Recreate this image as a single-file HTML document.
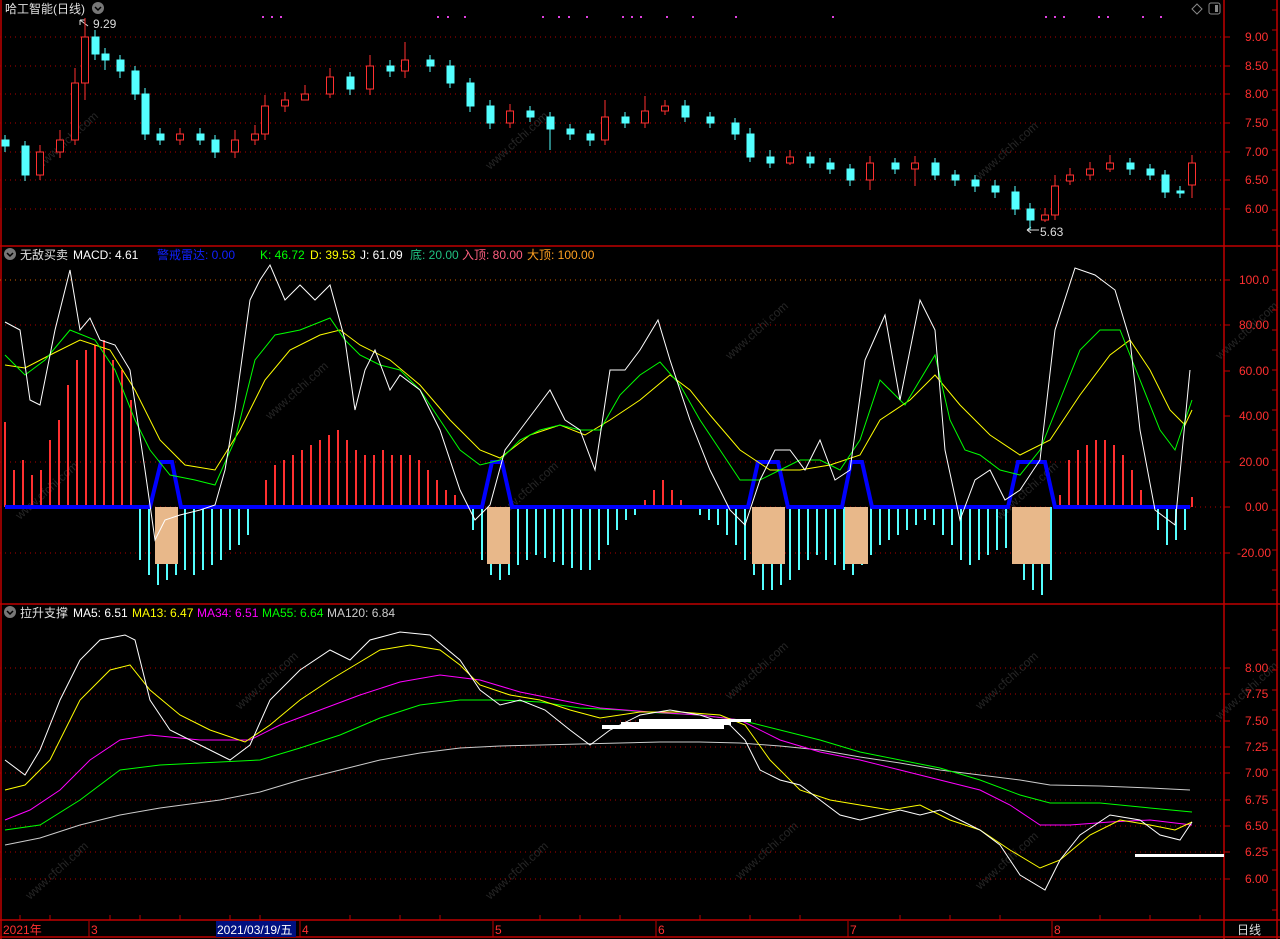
<!DOCTYPE html>
<html><head><meta charset="utf-8"><style>
html,body{margin:0;padding:0;background:#000;width:1280px;height:939px;overflow:hidden}
svg{display:block}
text{font-family:"Liberation Sans","Noto Sans CJK SC",sans-serif;font-size:12px}
</style></head><body>
<svg width="1280" height="939" xmlns="http://www.w3.org/2000/svg">
<rect width="1280" height="939" fill="#000"/>
<!-- watermarks -->
<g fill="#262626" font-size="26">
<text transform="translate(40,170) rotate(-42)">www.cfchi.com</text>
<text transform="translate(490,170) rotate(-42)">www.cfchi.com</text>
<text transform="translate(730,360) rotate(-42)">www.cfchi.com</text>
<text transform="translate(980,180) rotate(-42)">www.cfchi.com</text>
<text transform="translate(1220,360) rotate(-42)">www.cfchi.com</text>
<text transform="translate(20,520) rotate(-42)">www.cfchi.com</text>
<text transform="translate(270,420) rotate(-42)">www.cfchi.com</text>
<text transform="translate(500,520) rotate(-42)">www.cfchi.com</text>
<text transform="translate(1000,520) rotate(-42)">www.cfchi.com</text>
<text transform="translate(240,710) rotate(-42)">www.cfchi.com</text>
<text transform="translate(730,700) rotate(-42)">www.cfchi.com</text>
<text transform="translate(980,710) rotate(-42)">www.cfchi.com</text>
<text transform="translate(1220,720) rotate(-42)">www.cfchi.com</text>
<text transform="translate(30,900) rotate(-42)">www.cfchi.com</text>
<text transform="translate(490,900) rotate(-42)">www.cfchi.com</text>
<text transform="translate(740,880) rotate(-42)">www.cfchi.com</text>
<text transform="translate(980,890) rotate(-42)">www.cfchi.com</text>
</g>
<g stroke="#c00000" stroke-width="1.5" fill="none">
<line x1="1" y1="0" x2="1" y2="939"/>
<line x1="1224" y1="0" x2="1224" y2="939"/>
<line x1="1277" y1="0" x2="1277" y2="939"/>
<line x1="0" y1="246" x2="1280" y2="246"/>
<line x1="0" y1="604" x2="1280" y2="604"/>
<line x1="0" y1="920" x2="1280" y2="920"/>
<line x1="0" y1="937" x2="1280" y2="937"/>
</g>
<g stroke="#c00000" stroke-width="1">
<path d="M1224 37h6M1224 66h6M1224 94h6M1224 123h6M1224 152h6M1224 180h6M1224 209h6M1224 280h6M1224 325h6M1224 371h6M1224 416h6M1224 462h6M1224 507h6M1224 553h6M1224 668h6M1224 694h6M1224 721h6M1224 747h6M1224 773h6M1224 800h6M1224 826h6M1224 852h6M1224 879h6"/>
<path d="M1272 10h5M1272 30h5M1272 50h5M1272 70h5M1272 90h5M1272 110h5M1272 130h5M1272 150h5M1272 170h5M1272 190h5M1272 210h5M1272 230h5M1272 270h5M1272 290h5M1272 310h5M1272 330h5M1272 350h5M1272 370h5M1272 390h5M1272 410h5M1272 430h5M1272 450h5M1272 470h5M1272 490h5M1272 510h5M1272 530h5M1272 550h5M1272 570h5M1272 590h5M1272 630h5M1272 650h5M1272 670h5M1272 690h5M1272 710h5M1272 730h5M1272 750h5M1272 770h5M1272 790h5M1272 810h5M1272 830h5M1272 850h5M1272 870h5M1272 890h5M1272 910h5"/>
</g>
<g stroke="#b00000" stroke-width="1" stroke-dasharray="1,4">
<path d="M0 37H1224M0 66H1224M0 94H1224M0 123H1224M0 152H1224M0 180H1224M0 209H1224"/>
<path d="M0 325H1224M0 462H1224M0 553H1224M0 507H1224"/>
<path d="M0 668H1224M0 694H1224M0 721H1224M0 747H1224M0 773H1224M0 800H1224M0 826H1224M0 852H1224M0 879H1224"/>
</g>
<path d="M0 280H1224" stroke="#d06000" stroke-dasharray="1,4"/>
<g fill="#ff3030" font-size="12">
<text x="1245" y="41">9.00</text><text x="1245" y="70">8.50</text><text x="1245" y="98">8.00</text><text x="1245" y="127">7.50</text><text x="1245" y="156">7.00</text><text x="1245" y="184">6.50</text><text x="1245" y="213">6.00</text>
<text x="1239" y="284">100.0</text><text x="1239" y="329">80.00</text><text x="1239" y="375">60.00</text><text x="1239" y="420">40.00</text><text x="1239" y="466">20.00</text><text x="1245" y="511">0.00</text><text x="1237" y="557">-20.00</text>
<text x="1245" y="672">8.00</text><text x="1245" y="698">7.75</text><text x="1245" y="725">7.50</text><text x="1245" y="751">7.25</text><text x="1245" y="777">7.00</text><text x="1245" y="804">6.75</text><text x="1245" y="830">6.50</text><text x="1245" y="856">6.25</text><text x="1245" y="883">6.00</text>
</g>
<text x="5" y="13" fill="#e0e0e0" font-size="13">哈工智能(日线)</text>
<circle cx="98" cy="8" r="6" fill="#777"/><path d="M95 7l3 3 3-3" stroke="#000" fill="none" stroke-width="1.5"/>
<path d="M1192 9l5-5 5 5-5 5z" stroke="#888" fill="none"/>
<rect x="1209" y="3" width="11" height="11" rx="2" stroke="#888" fill="none"/><rect x="1215" y="5" width="3" height="7" fill="#888"/>
<g fill="#e040e0"><path d="M262 16h2v2h-2zM271 16h2v2h-2zM280 16h2v2h-2zM437 16h2v2h-2zM447 16h2v2h-2zM464 16h2v2h-2zM542 16h2v2h-2zM558 16h2v2h-2zM568 16h2v2h-2zM586 16h2v2h-2zM622 16h2v2h-2zM631 16h2v2h-2zM640 16h2v2h-2zM666 16h2v2h-2zM692 16h2v2h-2zM735 16h2v2h-2zM832 16h2v2h-2zM1045 16h2v2h-2zM1054 16h2v2h-2zM1063 16h2v2h-2zM1098 16h2v2h-2zM1107 16h2v2h-2zM1142 16h2v2h-2zM1160 16h2v2h-2z"/></g>
<text x="93" y="28" fill="#ddd">9.29</text><path d="M80 20l8 6M80 20v5M80 20h5" stroke="#ddd" fill="none"/>
<text x="1040" y="236" fill="#ddd">5.63</text><path d="M1027 230h12M1027 230l4-3M1027 230l4 3" stroke="#ddd" fill="none"/>
<g stroke-width="1">
<g stroke="#54ffff" fill="#54ffff">
<path d="M5 135V152M25 141V181M95 30V60M105 48V70M120 55V78M135 66V100M145 88V140M160 128V145M200 128V145M215 135V158M350 72V95M390 60V77M430 55V72M450 60V88M470 78V112M490 100V129M530 106V122M550 112V150M570 124V140M590 130V146M625 112V128M685 100V122M710 112V128M735 118V140M750 128V162M770 150V168M810 152V168M830 158V174M850 164V186M895 158V174M935 158V180M955 170V186M975 175V192M995 180V198M1015 186V215M1030 203V230M1130 158V175M1150 164V180M1165 170V198M1180 186V198"/>
<rect x="2" y="140" width="7" height="6"/><rect x="22" y="146" width="7" height="29"/><rect x="92" y="37" width="7" height="17"/><rect x="102" y="54" width="7" height="6"/><rect x="117" y="60" width="7" height="11"/><rect x="132" y="71" width="7" height="23"/><rect x="142" y="94" width="7" height="40"/><rect x="157" y="134" width="7" height="6"/><rect x="197" y="134" width="7" height="6"/><rect x="212" y="140" width="7" height="12"/><rect x="347" y="77" width="7" height="12"/><rect x="387" y="66" width="7" height="5"/><rect x="427" y="60" width="7" height="6"/><rect x="447" y="66" width="7" height="17"/><rect x="467" y="83" width="7" height="23"/><rect x="487" y="106" width="7" height="17"/><rect x="527" y="111" width="7" height="6"/><rect x="547" y="117" width="7" height="12"/><rect x="567" y="129" width="7" height="5"/><rect x="587" y="134" width="7" height="6"/><rect x="622" y="117" width="7" height="6"/><rect x="682" y="106" width="7" height="11"/><rect x="707" y="117" width="7" height="6"/><rect x="732" y="123" width="7" height="11"/><rect x="747" y="134" width="7" height="23"/><rect x="767" y="157" width="7" height="6"/><rect x="807" y="157" width="7" height="6"/><rect x="827" y="163" width="7" height="6"/><rect x="847" y="169" width="7" height="11"/><rect x="892" y="163" width="7" height="6"/><rect x="932" y="163" width="7" height="12"/><rect x="952" y="175" width="7" height="5"/><rect x="972" y="180" width="7" height="6"/><rect x="992" y="186" width="7" height="6"/><rect x="1012" y="192" width="7" height="17"/><rect x="1027" y="209" width="7" height="11"/><rect x="1127" y="163" width="7" height="6"/><rect x="1147" y="169" width="7" height="6"/><rect x="1162" y="175" width="7" height="17"/><rect x="1177" y="191" width="7" height="2"/>
</g>
<g stroke="#ff3030" fill="#000">
<path d="M40 145V180M60 130V158M75 68V145M85 18V100M180 128V145M235 130V158M255 125V145M265 95V140M285 92V112M305 85V100M330 68V98M370 55V95M405 42V78M510 104V128M605 100V145M645 96V128M665 100V115M790 150V165M870 156V190M915 156V186M1045 208V222M1055 175V220M1070 168V185M1090 162V180M1110 155V172M1192 155V198"/>
<rect x="36.5" y="152" width="7" height="23"/><rect x="56.5" y="140" width="7" height="12"/><rect x="71.5" y="83" width="7" height="57"/><rect x="81.5" y="37" width="7" height="46"/><rect x="176.5" y="134" width="7" height="6"/><rect x="231.5" y="140" width="7" height="12"/><rect x="251.5" y="134" width="7" height="6"/><rect x="261.5" y="106" width="7" height="28"/><rect x="281.5" y="100" width="7" height="6"/><rect x="301.5" y="94" width="7" height="6"/><rect x="326.5" y="77" width="7" height="17"/><rect x="366.5" y="66" width="7" height="23"/><rect x="401.5" y="60" width="7" height="11"/><rect x="506.5" y="111" width="7" height="12"/><rect x="601.5" y="117" width="7" height="23"/><rect x="641.5" y="111" width="7" height="12"/><rect x="661.5" y="106" width="7" height="5"/><rect x="786.5" y="157" width="7" height="6"/><rect x="866.5" y="163" width="7" height="17"/><rect x="911.5" y="163" width="7" height="6"/><rect x="1041.5" y="215" width="7" height="5"/><rect x="1051.5" y="186" width="7" height="29"/><rect x="1066.5" y="175" width="7" height="6"/><rect x="1086.5" y="169" width="7" height="6"/><rect x="1106.5" y="163" width="7" height="6"/><rect x="1188.5" y="163" width="7" height="22"/>
</g>
</g>
<circle cx="10" cy="254" r="6" fill="#777"/><path d="M7 253l3 3 3-3" stroke="#000" fill="none" stroke-width="1.5"/>
<text x="20" y="259" fill="#e0e0e0" font-size="13">无敌买卖</text>
<text x="73" y="259" fill="#fff">MACD: 4.61</text>
<text x="157" y="259" fill="#1020ff">警戒雷达: 0.00</text>
<text x="260" y="259" fill="#00ff00">K: 46.72</text>
<text x="310" y="259" fill="#ffff00">D: 39.53</text>
<text x="360" y="259" fill="#fff">J: 61.09</text>
<text x="410" y="259" fill="#20c080">底: 20.00</text>
<text x="462" y="259" fill="#ff6080">入顶: 80.00</text>
<text x="527" y="259" fill="#ffa020">大顶: 100.00</text>
<path stroke="#ff3030" stroke-width="2" d="M5 507V422M14 507V470M23 507V460M32 507V475M41 507V470M50 507V440M59 507V420M68 507V385M77 507V360M86 507V350M95 507V345M104 507V340M113 507V360M122 507V370M131 507V400M266 507V480M275 507V465M284 507V460M293 507V455M302 507V450M311 507V445M320 507V440M329 507V435M338 507V430M347 507V440M356 507V450M365 507V455M374 507V455M383 507V450M392 507V455M401 507V455M410 507V455M419 507V460M428 507V470M437 507V480M446 507V490M455 507V495M645 507V500M654 507V490M663 507V480M672 507V490M681 507V500M690 507V505M1060 507V495M1069 507V460M1078 507V450M1087 507V445M1096 507V440M1105 507V440M1114 507V445M1123 507V455M1132 507V470M1141 507V490M1192 507V497"/>
<path stroke="#54ffff" stroke-width="2" d="M140 507V560M149 507V575M158 507V585M167 507V580M176 507V575M185 507V570M194 507V575M203 507V570M212 507V565M221 507V560M230 507V550M239 507V545M248 507V535M473 507V530M482 507V560M491 507V575M500 507V580M509 507V575M518 507V565M527 507V560M536 507V555M545 507V558M554 507V562M563 507V565M572 507V568M581 507V570M590 507V570M599 507V560M608 507V545M617 507V530M626 507V520M635 507V515M700 507V515M709 507V520M718 507V525M727 507V535M736 507V545M745 507V560M754 507V575M763 507V590M772 507V590M781 507V585M790 507V580M799 507V570M808 507V560M817 507V555M826 507V560M835 507V565M844 507V570M853 507V575M862 507V565M871 507V555M880 507V545M889 507V540M898 507V535M907 507V530M916 507V525M925 507V520M934 507V525M943 507V535M952 507V545M961 507V560M970 507V565M979 507V560M988 507V555M997 507V550M1006 507V548M1015 507V560M1024 507V580M1033 507V590M1042 507V595M1051 507V580M1158 507V530M1167 507V545M1176 507V540M1185 507V530"/>
<g fill="#e8b88a">
<rect x="155" y="507" width="23" height="57"/><rect x="487" y="507" width="23" height="57"/><rect x="752" y="507" width="33" height="57"/><rect x="845" y="507" width="23" height="57"/><rect x="1012" y="507" width="38" height="57"/>
</g>
<polyline fill="none" stroke="#0000ff" stroke-width="4" points="5,507 150,507 161,462 172,462 181,507 482,507 492,462 502,462 512,507 748,507 758,462 778,462 788,507 842,507 851,462 862,462 872,507 1008,507 1018,462 1045,462 1055,507 1190,507"/>
<polyline fill="none" stroke="#ffff00" points="5,365 25,368 50,355 80,340 110,350 135,390 160,440 185,465 215,470 240,430 265,380 290,350 320,335 340,330 360,345 390,360 420,385 450,420 480,450 500,458 530,435 560,425 585,435 610,420 640,400 670,375 690,390 710,415 740,450 770,470 800,470 830,465 860,455 880,420 910,400 935,375 960,405 990,435 1020,455 1050,440 1080,395 1110,355 1130,340 1150,370 1170,410 1185,425 1192,410"/>
<polyline fill="none" stroke="#00ff00" points="5,355 25,375 45,360 70,330 95,340 115,370 135,420 150,450 170,475 195,480 215,485 235,440 255,360 275,335 300,330 330,318 345,340 360,355 380,365 400,370 420,390 440,420 460,450 480,465 500,460 520,440 540,430 560,425 580,430 600,430 620,395 640,375 660,362 680,385 700,420 720,450 740,480 760,480 780,470 800,460 820,460 840,470 860,440 880,380 905,405 935,355 950,420 965,450 980,455 1000,470 1020,475 1040,450 1060,400 1080,350 1100,330 1120,330 1140,380 1160,430 1175,450 1192,400"/>
<polyline fill="none" stroke="#fff" points="5,322 20,330 30,400 40,405 55,330 70,270 80,330 90,318 100,340 115,345 130,370 145,470 155,540 165,520 180,515 200,510 215,505 225,470 235,410 250,300 260,280 270,265 285,300 300,285 315,300 330,285 345,340 355,410 365,370 375,350 390,390 400,375 420,390 440,430 460,490 475,520 490,505 505,450 520,430 535,410 550,390 565,420 580,430 595,470 610,370 625,370 640,350 658,320 670,360 690,420 710,470 730,510 745,525 760,480 775,450 790,450 805,470 820,440 835,480 850,470 865,360 885,315 900,400 920,300 935,330 945,450 960,520 975,480 990,470 1005,500 1020,490 1040,460 1055,330 1075,268 1095,275 1115,290 1130,340 1140,430 1155,510 1175,525 1190,370"/>
<circle cx="10" cy="612" r="6" fill="#777"/><path d="M7 611l3 3 3-3" stroke="#000" fill="none" stroke-width="1.5"/>
<text x="20" y="617" fill="#e0e0e0" font-size="13">拉升支撑</text>
<text x="73" y="617" fill="#fff">MA5: 6.51</text>
<text x="132" y="617" fill="#ffff00">MA13: 6.47</text>
<text x="197" y="617" fill="#ff00ff">MA34: 6.51</text>
<text x="262" y="617" fill="#00ff00">MA55: 6.64</text>
<text x="327" y="617" fill="#ccc">MA120: 6.84</text>
<polyline fill="none" stroke="#ccc" points="5,845 40,838 80,825 120,815 160,808 220,800 260,792 300,780 340,770 380,760 420,753 460,748 500,746 540,745 580,744 620,743 660,742 700,742 740,743 780,746 820,750 860,757 900,763 940,770 980,775 1020,780 1050,785 1100,786 1150,788 1190,790"/>
<polyline fill="none" stroke="#00ff00" points="5,830 40,825 80,800 120,770 160,765 220,762 260,760 300,748 340,735 380,718 420,705 460,700 500,700 540,702 580,708 620,710 660,713 700,715 740,720 780,730 820,740 860,752 900,760 940,768 980,780 1020,795 1050,803 1100,803 1150,808 1192,812"/>
<polyline fill="none" stroke="#ff00ff" points="5,820 30,810 60,790 90,760 120,740 150,735 200,740 250,740 280,725 320,710 360,695 400,682 440,675 480,680 520,692 560,700 600,708 650,712 700,715 740,720 780,740 820,752 860,760 900,770 940,780 980,790 1010,805 1040,825 1070,825 1110,822 1150,820 1192,825"/>
<polyline fill="none" stroke="#ffff00" points="5,790 25,785 50,760 80,700 110,670 130,665 150,690 180,715 210,730 245,742 270,725 300,700 330,680 360,662 380,650 410,645 440,650 460,665 480,685 510,695 540,700 570,710 600,718 640,712 680,712 720,715 745,725 770,760 800,790 830,800 860,805 890,810 920,805 950,820 980,830 1010,850 1040,868 1060,860 1090,835 1120,820 1150,825 1175,830 1192,822"/>
<polyline fill="none" stroke="#fff" points="5,760 25,775 40,750 60,700 80,660 100,640 125,635 135,640 150,700 170,730 200,745 230,760 250,745 270,700 300,670 330,650 350,660 370,640 400,632 430,635 460,660 480,690 500,705 520,700 545,710 570,730 590,745 610,730 640,715 670,710 700,715 730,725 745,740 760,770 780,780 800,785 820,800 840,815 860,820 880,815 900,810 920,815 940,810 960,820 980,830 1000,845 1020,875 1045,890 1060,860 1080,835 1110,815 1140,820 1160,835 1180,840 1192,822"/>
<g fill="#fff">
<rect x="602" y="725" width="122" height="4"/><rect x="621" y="722" width="110" height="3"/><rect x="639" y="719" width="112" height="3"/>
<rect x="1135" y="854" width="89" height="3"/>
</g>
<rect x="216" y="921" width="80" height="16" fill="#001080"/>
<g stroke="#c00000"><path d="M89 921v16M300 921v16M493 921v16M656 921v16M848 921v16M1052 921v16M1224 921v16"/>
<path d="M20 920v-5M50 920v-5M110 920v-5M140 920v-5M180 920v-5M230 920v-5M260 920v-5M350 920v-5M400 920v-5M440 920v-5M540 920v-5M580 920v-5M620 920v-5M700 920v-5M750 920v-5M800 920v-5M900 920v-5M950 920v-5M1000 920v-5M1100 920v-5M1150 920v-5M1200 920v-5"/></g>
<g fill="#ff3030" font-size="12">
<text x="3" y="934">2021年</text><text x="91" y="934">3</text><text x="302" y="934">4</text><text x="495" y="934">5</text><text x="658" y="934">6</text><text x="850" y="934">7</text><text x="1054" y="934">8</text>
</g>
<text x="217" y="934" fill="#fff">2021/03/19/五</text>
<text x="1237" y="934" fill="#ddd" font-size="13">日线</text>
</svg>
</body></html>
